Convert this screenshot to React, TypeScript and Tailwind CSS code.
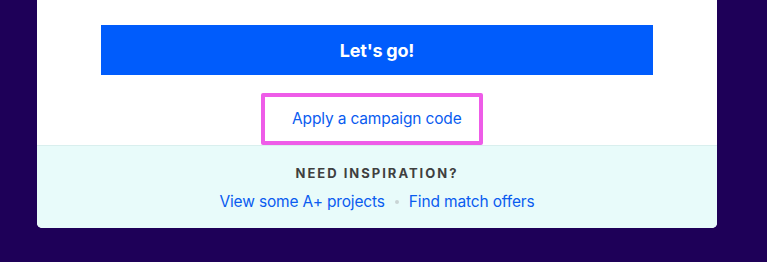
import React from "react";

export default function App() {
  return (
    <div className="w-[767px] h-[262px] bg-[#1e0058] overflow-hidden" style={{ fontFamily: "Inter, 'Noto Sans', sans-serif" }}>
      <div className="ml-[37px] w-[680px] bg-white rounded-b-[5px] overflow-hidden">
        <div className="pt-[25px] flex flex-col items-center">
          <button className="w-[552px] h-[50px] bg-[#005cfc] text-white font-bold text-[18px] tracking-[-0.2px]">
            Let's go!
          </button>
          <div className="mt-[18px] w-[222px] h-[52px] border-[4px] border-[#ee5ce8] rounded-[2px] flex items-center justify-start pl-[27px] ml-[-10px]">
            <span className="text-[#0a5cf0] text-[15.5px] tracking-[-0.15px]">Apply a campaign code</span>
          </div>
        </div>
        <div className="bg-[#e8fbfa] border-t border-[#d9efee] h-[83px] flex flex-col items-center pt-[17px]">
          <div className="text-[#3f3f3f] text-[13px] font-bold tracking-[2px] leading-[20px]">NEED INSPIRATION?</div>
          <div className="mt-[8px] flex items-center text-[15.5px] text-[#0a5cf0] leading-[22px] tracking-[-0.15px]">
            <span>View some A+ projects</span>
            <span className="mx-[10px] w-[4px] h-[4px] rounded-full bg-[#c9d4d4]"></span>
            <span>Find match offers</span>
          </div>
        </div>
      </div>
    </div>
  );
}
